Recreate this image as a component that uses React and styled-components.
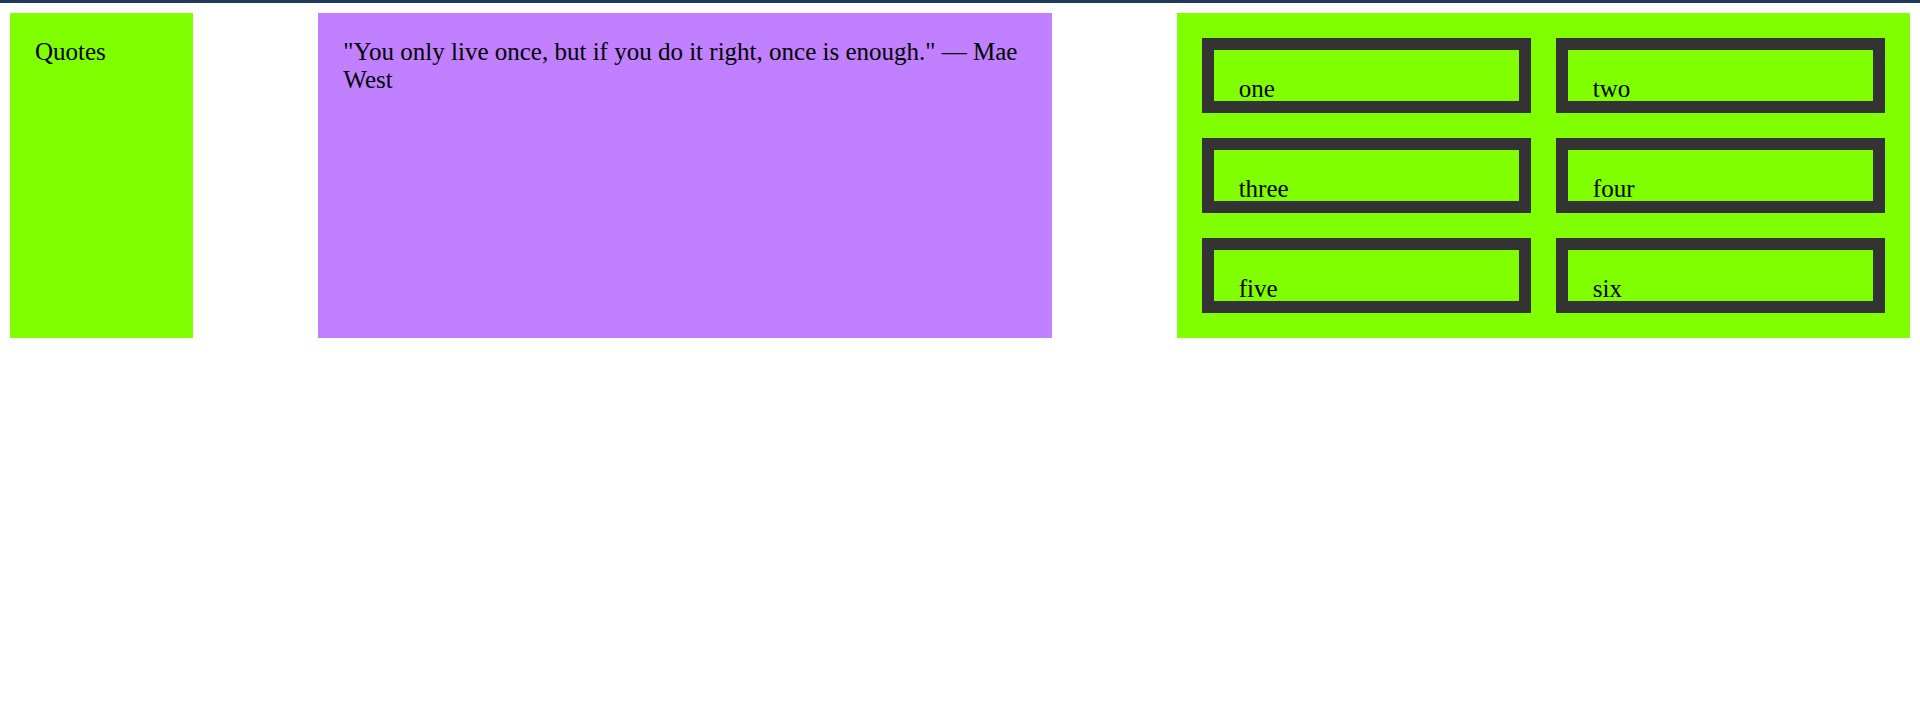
import styled, { createGlobalStyle } from 'styled-components';

const GlobalStyle = createGlobalStyle`
  html, body {
    margin: 0;
    padding: 0;
    background: #fff;
  }
  body {
    font-family: 'Liberation Serif', 'Times New Roman', serif;
    font-size: 25px;
    color: #000;
  }
`;

const TopBar = styled.div`
  height: 3px;
  background-color: #1f3a5c;
`;

const Page = styled.main`
  display: grid;
  grid-template-columns: 1fr 4fr 4fr;
  gap: 125px;
  padding: 10px;
`;

const Panel = styled.section`
  background-color: ${(p) => p.$bg};
  padding: 25px;
`;

const Tiles = styled.section`
  background-color: #80ff00;
  padding: 25px;
  display: grid;
  grid-template-columns: 1fr 1fr;
  gap: 25px;
`;

const Tile = styled.div`
  box-sizing: border-box;
  height: 75px;
  border: 12px solid #333;
  padding: 25px 25px 0;
  line-height: normal;
`;

const tiles = ['one', 'two', 'three', 'four', 'five', 'six'];

export default function App() {
  return (
    <>
      <GlobalStyle />
      <TopBar />
      <Page>
        <Panel $bg="#80ff00">Quotes</Panel>
        <Panel $bg="#c080ff">
          "You only live once, but if you do it right, once is enough." — Mae West
        </Panel>
        <Tiles>
          {tiles.map((t) => (
            <Tile key={t}>{t}</Tile>
          ))}
        </Tiles>
      </Page>
    </>
  );
}
